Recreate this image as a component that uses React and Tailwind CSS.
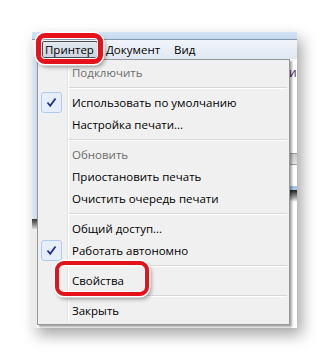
import React from "react";

// Printer window menu with the "Принтер" dropdown open

const items = [
  { label: "Подключить", disabled: true },
  { sep: true },
  { label: "Использовать по умолчанию", checked: true },
  { label: "Настройка печати..." },
  { sep: true },
  { label: "Обновить", disabled: true },
  { label: "Приостановить печать" },
  { label: "Очистить очередь печати" },
  { sep: true },
  { label: "Общий доступ..." },
  { label: "Работать автономно", checked: true },
  { sep: true },
  { label: "Свойства" },
  { sep: true },
  { label: "Закрыть" },
];

function CheckBox() {
  return (
    <div className="absolute left-[3px] top-0 w-[21px] h-[21px] rounded-[3px] border border-[#aecbee] bg-[#e6eefb] flex items-center justify-center">
      <svg width="11" height="11" viewBox="0 0 11 11">
        <path d="M1.5 5.5 L4.2 8.8 L9.5 1.5" fill="none" stroke="#1d2a86" strokeWidth="1.7" />
      </svg>
    </div>
  );
}

function MenuItem({ item }) {
  if (item.sep) {
    return (
      <div className="h-[8px] flex flex-col justify-center pl-[30px] pr-[2px]">
        <div className="h-px bg-[#d7d7d7]" />
        <div className="h-px bg-white" />
      </div>
    );
  }
  return (
    <div className="relative h-[22px] flex items-center pl-[34px]">
      {item.checked && <CheckBox />}
      <span className={item.disabled ? "text-[#6d6d6d]" : "text-black"}>{item.label}</span>
    </div>
  );
}

export default function App() {
  return (
    <div
      className="w-[329px] h-[361px] bg-white pt-[32px] pl-[32px] overflow-hidden"
      style={{ fontFamily: '"Open Sans", "Noto Sans", sans-serif' }}
    >
      {/* window */}
      <div className="relative w-[265px] h-[296px] bg-white shadow-[5px_7px_14px_rgba(0,0,0,0.35)] flex flex-col">
        <div className="h-[7px] bg-gradient-to-b from-[#d5e4f4] to-[#c3d8ee]" />
        <div className="h-px bg-[#8396ab]" />
        <div className="h-[19px] bg-gradient-to-b from-[#f2f5fa] to-[#dfe7f2] flex items-center text-[11.5px] text-black">
          <div className="ml-[10px] w-[56px] h-[17px] rounded-[2px] border border-[#4b4f55] bg-gradient-to-b from-[#e4e9ef] to-[#ccd4de] flex items-center pl-[2px]">
            Принтер
          </div>
          <span className="ml-[8px]">Документ</span>
          <span className="ml-[14px]">Вид</span>
        </div>

        {/* window contents behind the menu */}
        <div className="flex-1 flex">
          <div className="w-[5px] flex flex-col">
            <div className="h-[160px] bg-gradient-to-r from-[#dfe9f5] to-[#c8d9ec]" />
            <div className="h-[10px] bg-gradient-to-b from-[#333] to-[#ddd]" />
            <div className="flex-1 bg-[#ececec]" />
          </div>
          <div className="flex-1" />
          <div className="w-[8px] flex flex-col text-[12px]">
            <div className="h-[4px] bg-white" />
            <div className="h-[20px] text-[#5a1a70] leading-[20px] overflow-hidden">и</div>
            <div className="h-[70px] bg-white" />
            <div className="h-[12px] bg-gradient-to-b from-[#c9c9c9] to-[#e4e4e4] border-y border-[#9a9a9a]" />
            <div className="h-[21px] bg-white" />
            <div className="h-[4px] bg-[#a9c6e8]" />
            <div className="h-[12px] bg-gradient-to-b from-[#222] to-white" />
            <div className="flex-1 bg-white" />
          </div>
        </div>

        {/* dropdown */}
        <div className="absolute left-[5px] top-[27px] w-[253px] h-[266px] border border-[#979797] bg-[#f0f0f0] shadow-[2px_2px_2px_rgba(0,0,0,0.35)] py-[2px] text-[11.5px]">
          <div className="absolute left-[29px] top-[2px] bottom-[2px] w-px bg-[#e2e3e3]" />
          <div className="absolute left-[30px] top-[2px] bottom-[2px] w-px bg-white" />
          {items.map((item, i) => (
            <MenuItem key={i} item={item} />
          ))}
        </div>

        {/* red highlight around "Принтер" */}
        <div className="absolute left-[4px] top-[1px] w-[67px] h-[31px] rounded-[9px] border-[5px] border-[#e5121b] shadow-[0_0_0_1.5px_#fff,inset_0_0_0_1px_#fff,2px_3px_4px_rgba(0,0,0,0.4)]" />
        {/* red highlight around "Свойства" */}
        <div className="absolute left-[23px] top-[229px] w-[94px] h-[35px] rounded-[9px] border-[4px] border-[#e5121b] shadow-[0_0_0_1.5px_#fff,inset_0_0_0_1px_#fff,2px_3px_4px_rgba(0,0,0,0.4)]" />
      </div>
    </div>
  );
}
